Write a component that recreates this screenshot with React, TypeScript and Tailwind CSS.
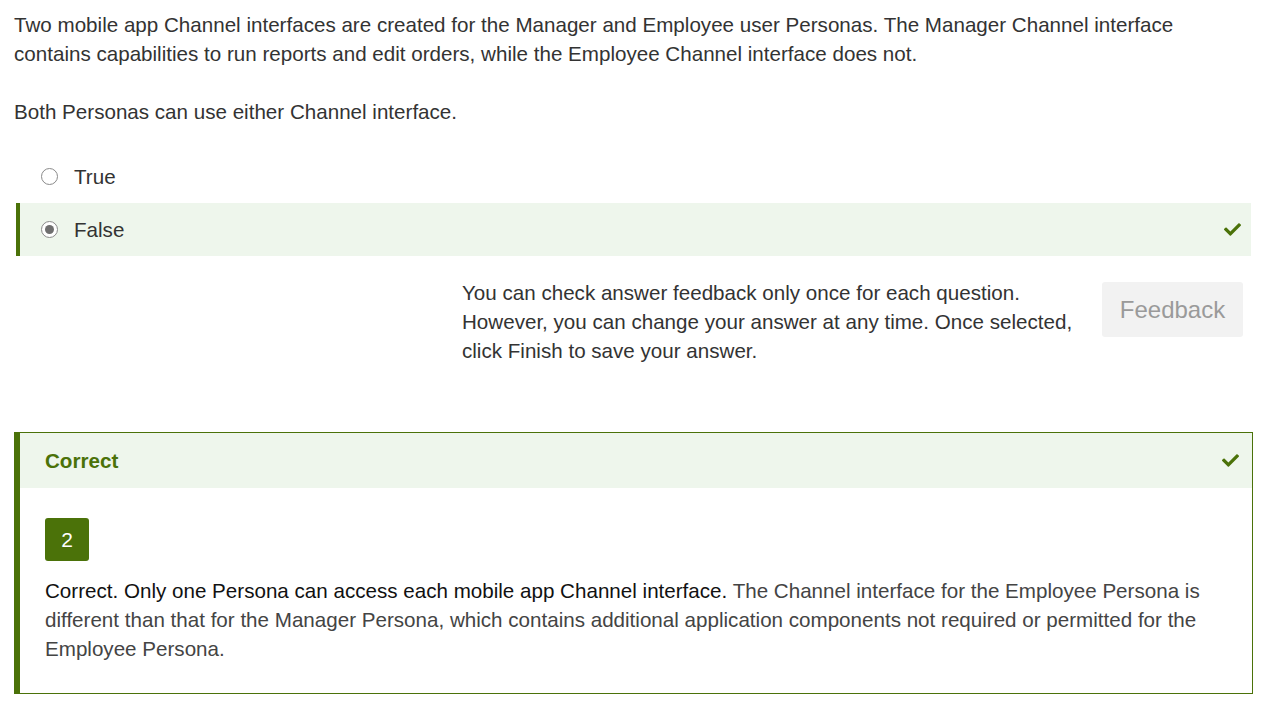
import { FaCheck } from "react-icons/fa";

const options = [
  { label: "True", selected: false },
  { label: "False", selected: true },
] as const;

function Radio({ checked }: { checked: boolean }) {
  return (
    <span className="flex h-[17px] w-[17px] shrink-0 items-center justify-center rounded-full border border-[#8a8a8a] bg-white">
      {checked && <span className="h-[9px] w-[9px] rounded-full bg-[#6f6f6f]" />}
    </span>
  );
}

export default function App() {
  return (
    <div className="min-h-[710px] bg-white pl-[14px] pr-[16px] pt-[10px] font-['Liberation_Sans',Arial,sans-serif] text-[20.6px] leading-[29px] text-[#333]">
      <p>
        Two mobile app Channel interfaces are created for the Manager and Employee user Personas. The Manager Channel
        interface contains capabilities to run reports and edit orders, while the Employee Channel interface does not.
      </p>
      <p className="mt-[29px]">Both Personas can use either Channel interface.</p>

      <div className="ml-[2px] mr-[2px] mt-[24px]">
        {options.map((o) => (
          <div
            key={o.label}
            className={
              o.selected
                ? "flex h-[53px] items-center border-l-4 border-[#4b7209] bg-[#eef6ec] pl-[21px] pr-[10px]"
                : "flex h-[53px] items-center border-l-4 border-transparent pl-[21px] pr-[10px]"
            }
          >
            <Radio checked={o.selected} />
            <span className="ml-[16px] flex-1">{o.label}</span>
            {o.selected && <FaCheck className="h-[17px] w-[17px] text-[#4b7209]" />}
          </div>
        ))}
      </div>

      <div className="mr-[10px] mt-[22px] flex justify-end gap-[24px]">
        <p className="w-[616px]">
          You can check answer feedback only once for each question. However, you can change your answer at any time.
          Once selected, click Finish to save your answer.
        </p>
        <button className="mt-[4px] h-[55px] w-[141px] rounded-[3px] bg-[#f2f2f2] text-[24px] text-[#9a9a9a]">
          Feedback
        </button>
      </div>

      <div className="mt-[67px] border border-l-[6px] border-[#4b7209]">
        <div className="flex h-[55px] items-center justify-between bg-[#eef6ec] pl-[25px] pr-[13px]">
          <span className="font-bold text-[#4b7209]">Correct</span>
          <FaCheck className="h-[17px] w-[17px] text-[#4b7209]" />
        </div>
        <div className="px-[25px] pb-[30px] pt-[30px]">
          <div className="flex h-[43px] w-[44px] items-center justify-center rounded-[3px] bg-[#4b7209] text-[21px] text-white">
            2
          </div>
          <p className="mt-[15px] text-[#444]">
            <span className="text-[#111]">Correct. Only one Persona can access each mobile app Channel interface.</span>{" "}
            The Channel interface for the Employee Persona is different than that for the Manager Persona, which contains
            additional application components not required or permitted for the Employee Persona.
          </p>
        </div>
      </div>
    </div>
  );
}
